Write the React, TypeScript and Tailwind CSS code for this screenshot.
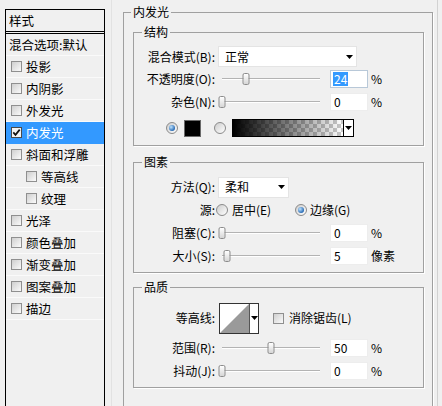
import type { ReactNode } from 'react'

const styleItems = [
  { label: '投影' },
  { label: '内阴影' },
  { label: '外发光' },
  { label: '内发光', checked: true, active: true },
  { label: '斜面和浮雕' },
  { label: '等高线', indent: true },
  { label: '纹理', indent: true },
  { label: '光泽' },
  { label: '颜色叠加' },
  { label: '渐变叠加' },
  { label: '图案叠加' },
  { label: '描边' },
]

function CheckBox({ checked = false }: { checked?: boolean }) {
  return (
    <span
      className={`flex h-[11px] w-[11px] shrink-0 items-center justify-center border ${
        checked ? 'border-[#4a4a4a] bg-[#f4f4f4]' : 'border-[#8f8f8f] bg-gradient-to-br from-[#cfcfcf] to-[#fbfbfb]'
      }`}
    >
      {checked && (
        <svg width="9" height="9" viewBox="0 0 9 9">
          <path d="M1.3 4.4 L3.5 6.9 L7.7 1.6" fill="none" stroke="#111" strokeWidth="1.7" />
        </svg>
      )}
    </span>
  )
}

function Radio({ on = false }: { on?: boolean }) {
  return (
    <span className="flex h-[12px] w-[12px] shrink-0 items-center justify-center rounded-full border border-[#8a8a8a] bg-gradient-to-br from-[#cdcdcd] to-white">
      {on && <span className="h-[6px] w-[6px] rounded-full bg-[radial-gradient(circle_at_35%_35%,#bfe4ff,#1f63b0_75%)]" />}
    </span>
  )
}

function DownArrow() {
  return (
    <svg width="7" height="4" viewBox="0 0 7 4" className="shrink-0">
      <path d="M0 0 H7 L3.5 4 Z" fill="#000" />
    </svg>
  )
}

function Label({ children }: { children: ReactNode }) {
  return <span className="w-[73px] shrink-0 text-right whitespace-nowrap">{children}</span>
}

function Dropdown({ value, width }: { value: string; width: string }) {
  return (
    <div className={`ml-[3px] flex h-[21px] ${width} items-center justify-between border border-[#e4e4e4] bg-white pl-[6px] pr-[3px]`}>
      <span>{value}</span>
      <DownArrow />
    </div>
  )
}

function Slider({ pct }: { pct: number }) {
  return (
    <div className="relative ml-[7px] h-[14px] w-[98px] shrink-0">
      <div className="mt-[6px] h-[2px] border-t border-[#b3b3b3] bg-white" />
      <div
        className="absolute top-[1px] h-[12px] w-[7px] -translate-x-1/2 rounded-[2px] border border-[#8c8c8c] bg-gradient-to-b from-white to-[#d6d6d6]"
        style={{ left: `${pct}%` }}
      />
    </div>
  )
}

function NumBox({ value, focused = false }: { value: string; focused?: boolean }) {
  return (
    <div
      className={`ml-[10px] flex h-[18px] w-[38px] shrink-0 items-center border bg-white pl-[2px] ${
        focused ? 'border-[#b8c8d8]' : 'border-[#ededed]'
      }`}
    >
      <span className={focused ? 'bg-[#3399ff] px-px text-white' : 'px-px'}>{value}</span>
    </div>
  )
}

function SliderRow({ label, pct, value, unit = '%', focused }: { label: string; pct: number; value: string; unit?: string; focused?: boolean }) {
  return (
    <div className="flex h-[23px] items-center">
      <Label>{label}</Label>
      <Slider pct={pct} />
      <NumBox value={value} focused={focused} />
      <span className="ml-[3px]">{unit}</span>
    </div>
  )
}

function Group({ title, className = '', children }: { title: string; className?: string; children: ReactNode }) {
  return (
    <fieldset className={`w-[291px] border border-[#a0a0a0] px-[8px] shadow-[1px_1px_0_#ffffff] ${className}`}>
      <legend className="px-[2px] leading-[16px]">{title}</legend>
      {children}
    </fieldset>
  )
}

export default function App() {
  return (
    <div className="flex h-[406px] w-[442px] overflow-hidden bg-[#f0f0f0] font-['Noto_Sans_CJK_SC','Noto_Sans',sans-serif] text-[12px] leading-[14px] text-black">
      {/* style list */}
      <div className="ml-[5px] mt-[9px] h-[410px] w-[100px] shrink-0 border border-black text-[12.5px]">
        <div className="flex h-[22px] items-center border-b border-black pl-[3px]">样式</div>
        <div className="mt-px h-px bg-black" />
        <div className="flex h-[22px] items-center border-b border-[#fafafa] pl-[3px]">混合选项:默认</div>
        {styleItems.map((it) => (
          <div
            key={it.label}
            className={`flex h-[22px] items-center gap-[4px] border-b ${it.indent ? 'pl-[20px]' : 'pl-[5px]'} ${
              it.active ? 'border-[#3399ff] bg-[#3399ff] text-white' : 'border-[#fafafa]'
            }`}
          >
            <CheckBox checked={it.checked} />
            <span>{it.label}</span>
          </div>
        ))}
      </div>

      <div className="ml-[6px] w-px shrink-0 bg-[#e2e2e2]" />

      {/* inner glow settings */}
      <fieldset className="ml-[11px] mt-[4px] h-[420px] w-[310px] shrink-0 border border-[#a0a0a0] pl-[9px] shadow-[1px_1px_0_#ffffff]">
        <legend className="ml-[-2px] px-[2px] leading-[16px]">内发光</legend>

        <Group title="结构" className="mt-[4px]">
          <div className="pb-[6px] pt-[6px]">
            <div className="flex h-[21px] items-center">
              <Label>混合模式(B):</Label>
              <Dropdown value="正常" width="w-[139px]" />
            </div>
            <SliderRow label="不透明度(O):" pct={24} value="24" focused />
            <SliderRow label="杂色(N):" pct={0} value="0" />
            <div className="mt-[4px] flex h-[22px] items-center">
              <span className="ml-[24px]">
                <Radio on />
              </span>
              <span className="ml-[6px] h-[17px] w-[17px] shrink-0 border border-[#6a6a6a] bg-black" />
              <span className="ml-[13px]">
                <Radio />
              </span>
              <div className="ml-[6px] flex h-[18px] w-[122px] border border-black">
                <div className="flex-1 bg-[repeating-conic-gradient(#c9c9c9_0%_25%,#ffffff_0%_50%)] bg-[length:8px_8px]">
                  <div className="h-full w-full bg-gradient-to-r from-black to-transparent" />
                </div>
                <div className="flex w-[10px] items-center justify-center border-l border-black bg-white">
                  <DownArrow />
                </div>
              </div>
            </div>
          </div>
        </Group>

        <Group title="图素" className="mt-[8px]">
          <div className="pb-[5px] pt-[6px]">
            <div className="flex h-[22px] items-center">
              <Label>方法(Q):</Label>
              <Dropdown value="柔和" width="w-[71px]" />
            </div>
            <div className="flex h-[23px] items-center">
              <Label>源:</Label>
              <span className="ml-[1px]">
                <Radio />
              </span>
              <span className="ml-[4px] w-[63px] shrink-0">居中(E)</span>
              <Radio on />
              <span className="ml-[3px]">边缘(G)</span>
            </div>
            <SliderRow label="阻塞(C):" pct={0} value="0" />
            <SliderRow label="大小(S):" pct={5} value="5" unit="像素" />
          </div>
        </Group>

        <Group title="品质" className="mt-[6px]">
          <div className="pb-[5px] pt-[7px]">
            <div className="flex h-[32px] items-center">
              <Label>等高线:</Label>
              <div className="ml-[4px] flex h-[31px] w-[40px] shrink-0 border border-[#333]">
                <svg width="29" height="29" viewBox="0 0 29 29" className="shrink-0">
                  <rect width="29" height="29" fill="#fff" />
                  <path d="M0 29 L29 0 L29 29 Z" fill="#9a9a9a" />
                </svg>
                <div className="flex flex-1 items-center justify-center border-l border-[#555] bg-white">
                  <DownArrow />
                </div>
              </div>
              <span className="ml-[14px]">
                <CheckBox />
              </span>
              <span className="ml-[5px]">消除锯齿(L)</span>
            </div>
            <div className="mt-[2px]">
              <SliderRow label="范围(R):" pct={50} value="50" />
            </div>
            <SliderRow label="抖动(J):" pct={0} value="0" />
          </div>
        </Group>
      </fieldset>

      <div className="ml-[4px] w-px shrink-0 bg-[#d2d2d2]" />
    </div>
  )
}
